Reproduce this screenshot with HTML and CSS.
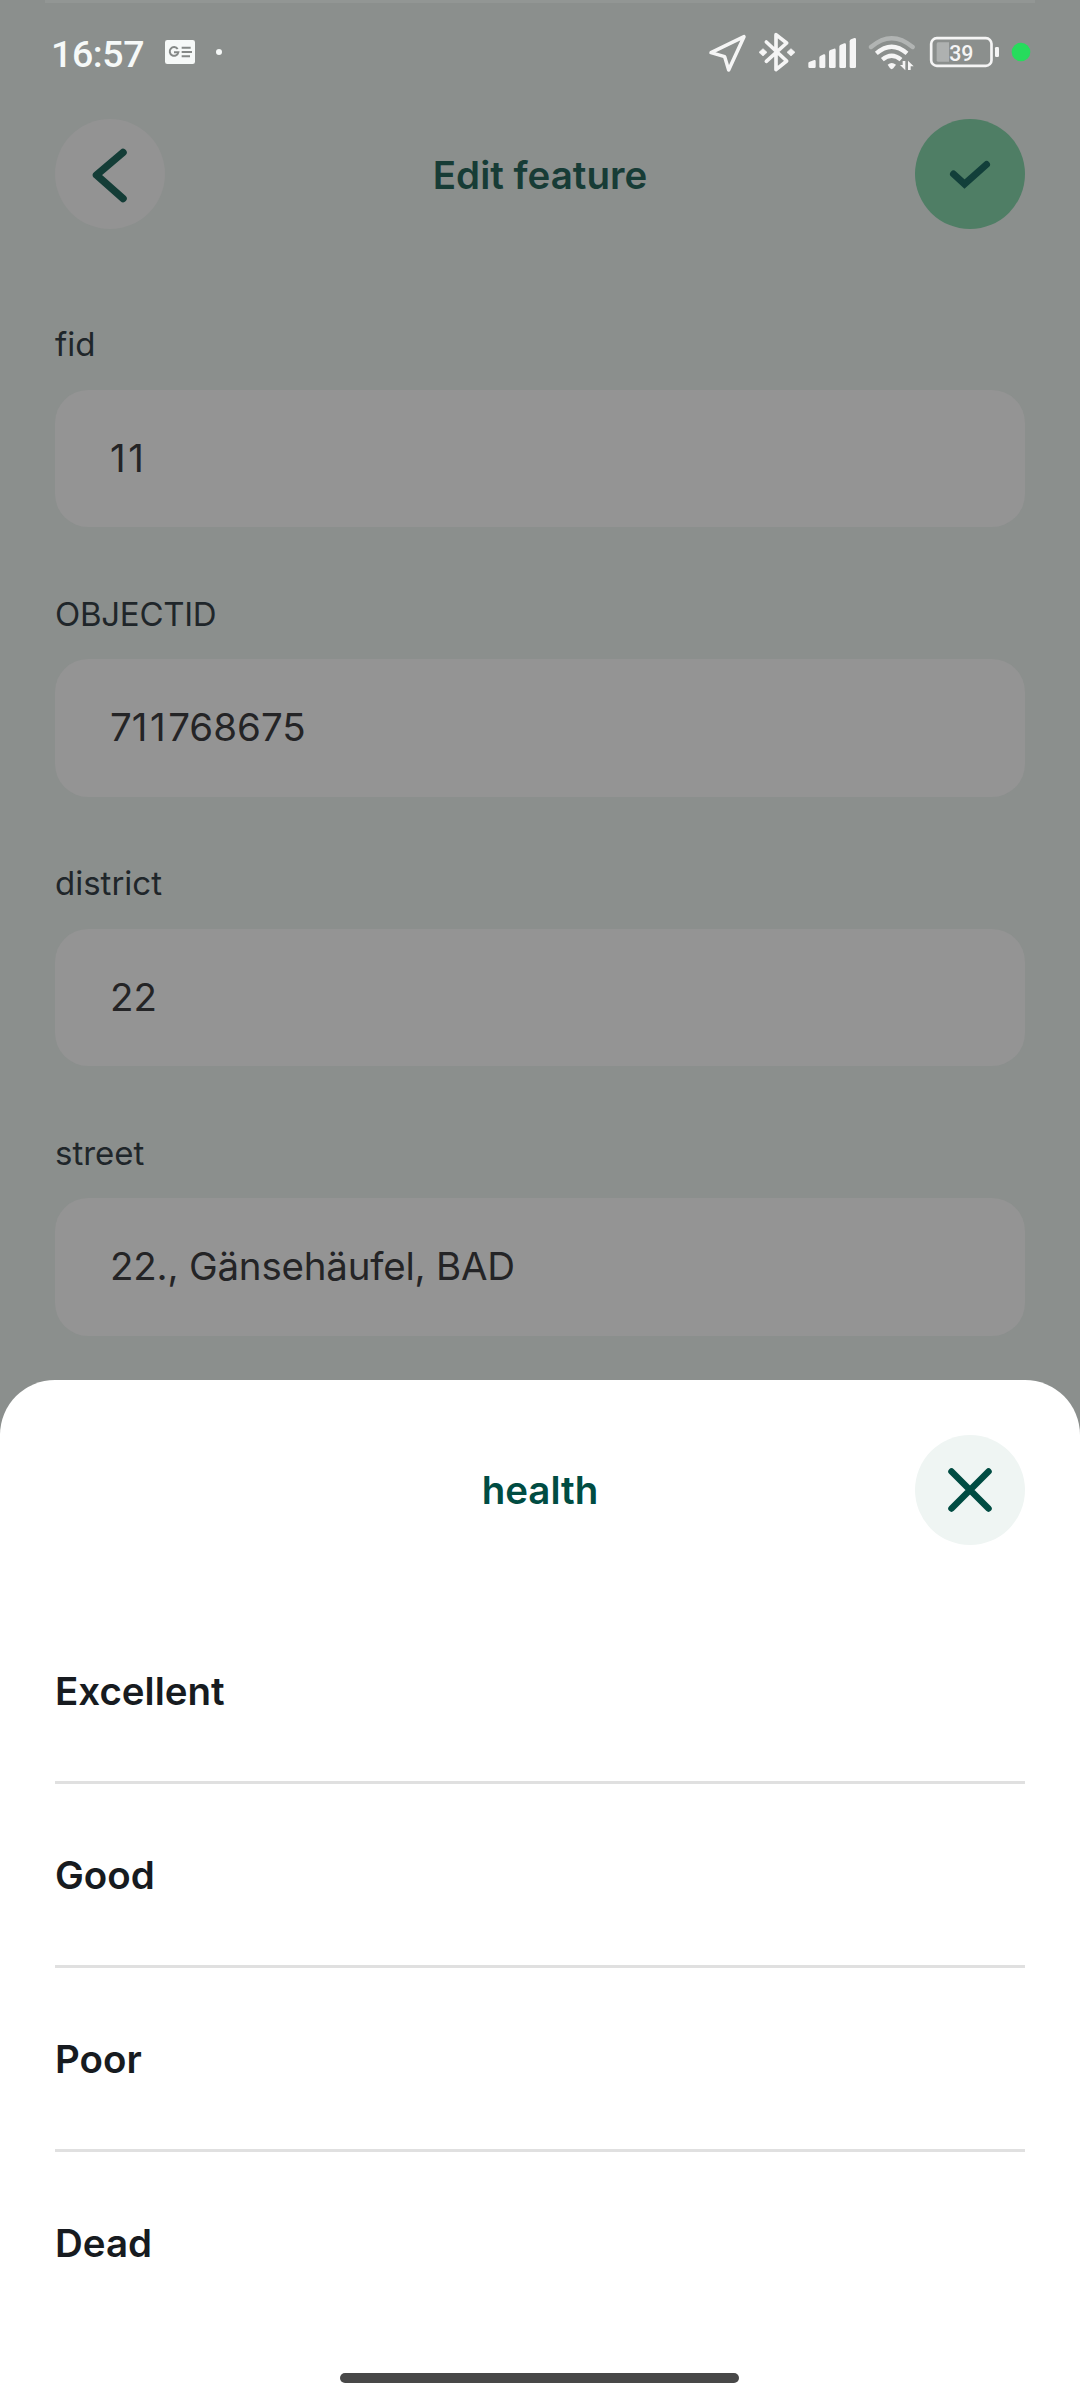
FILE: index.html
```html
<!DOCTYPE html>
<html lang="en">
<head>
<meta charset="utf-8">
<title>Edit feature</title>
<link rel="stylesheet" href="styles.css">
</head>
<body>
<div class="screen">
  <div class="top-edge"></div>
  <div class="status">
    <div class="status-left">
      <span class="time">16:57</span>
      <svg class="news" viewBox="0 0 90 72"><rect width="90" height="72" rx="7" fill="#f6f9f8"/><g fill="none" stroke="#858987" stroke-width="6"><path d="M38 27a13 13 0 1 0 2 10H27"/><path d="M50 23h27M50 36h31M50 49h25"/></g></svg>
      <span class="more"></span>
    </div>
    <div class="status-right">
      <svg width="40" height="43.33" viewBox="54 30 120 130"><path d="M162 50 116 150 104 110 63 98Z" fill="none" stroke="#f5f5f5" stroke-width="10.500" stroke-linejoin="round"/></svg>
      <svg width="39" height="43.33" viewBox="204 30 117 130"><path d="M229 66 290 123 258 149V44L290 69 229 124" fill="none" stroke="#f5f5f5" stroke-width="11" stroke-linejoin="round" stroke-linecap="round"/><path d="M207 97l12-11 12 11-12 11zM291 97l12-11 12 11-12 11z" fill="#f5f5f5" stroke="#f5f5f5" stroke-width="2"/></svg>
      <svg width="50" height="43.33" viewBox="351 30 150 130"><g fill="#f5f5f5"><path d="M355 129q0-3 4-4l14-5q4-1 4 4v16q0 4-4 4h-14q-4 0-4-4z"/><path d="M388 113q0-4 4-6l9-4q5-1 5 4v33q0 4-4 4h-10q-4 0-4-4z"/><path d="M417 96q0-4 4-6l11-4q5-1 5 4v50q0 4-4 4h-12q-4 0-4-4z"/><path d="M448 80q0-4 4-6l11-4q5-1 5 4v66q0 4-4 4h-12q-4 0-4-4z"/><path d="M479 64q0-4 4-6l10-4q5-1 5 4v82q0 4-4 4h-11q-4 0-4-4z"/></g></svg>
      <svg width="50" height="43.33" viewBox="531 30 150 130"><g fill="none" stroke-width="13"><path d="M543 81Q605 28 668 81" stroke="#b1b4b3" stroke-linecap="round"/><path d="M559 100Q605 60 651 100" stroke="#f5f5f5"/><path d="M577 119Q605 95 633 119" stroke="#f5f5f5"/></g><path d="M593 134q12-10 25 0l-8 11q-5 5-10 0z" fill="#f5f5f5"/><path d="M646 123v28l-16-16h8v-12zM654 150v-28l17 17h-9v11z" fill="#f5f5f5"/></svg>
      <svg width="73" height="43.33" viewBox="711 30 219 130"><path d="M744 67h33v58h-33q-4 0-4-4V72q0-5 4-5z" fill="#aeb1b0"/><rect x="723.5" y="54.500" width="181" height="83" rx="17" fill="none" stroke="#f5f5f5" stroke-width="8"/><rect x="915" y="81" width="12" height="30" rx="4" fill="#f5f5f5"/><text x="814" y="122" text-anchor="middle" class="level">39</text></svg>
      <svg width="21" height="43.33" viewBox="960 30 63 130"><circle cx="993" cy="96" r="28" fill="#26dc5c"/></svg>
    </div>
  </div>

  <header class="header">
    <button class="round back" aria-label="Back"><svg viewBox="0 0 110 110"><path d="M68 33.500 41.500 56 68 79.500" fill="none" stroke="#143d37" stroke-width="7.500" stroke-linecap="round" stroke-linejoin="round"/></svg></button>
    <h1 class="title page-title">Edit feature</h1>
    <button class="round save" aria-label="Save"><svg viewBox="0 0 110 110"><path d="M38.500 55 49.500 65 71.500 45.500" fill="none" stroke="#123f3a" stroke-width="7" stroke-linecap="round" stroke-linejoin="miter"/></svg></button>
  </header>

  <main class="form">
    <div class="field"><div class="label">fid</div><div class="input"><span class="ones">11</span></div></div>
    <div class="field"><div class="label caps">OBJECTID</div><div class="input">7<span class="ones">11</span>768675</div></div>
    <div class="field"><div class="label">district</div><div class="input">22</div></div>
    <div class="field"><div class="label">street</div><div class="input address">22., Gänsehäufel, BAD</div></div>
  </main>

  <section class="sheet">
    <div class="sheet-header">
      <span></span>
      <h2 class="title sheet-title">health</h2>
      <button class="round close" aria-label="Close"><svg viewBox="0 0 110 110"><path d="M36.500 36.500 73.500 73.500M73.500 36.500 36.500 73.500" fill="none" stroke="#004c42" stroke-width="6.500" stroke-linecap="round"/></svg></button>
    </div>
    <ul class="options">
      <li>Excellent</li>
      <li>Good</li>
      <li>Poor</li>
      <li>Dead</li>
    </ul>
    <div class="home-bar"></div>
  </section>
</div>
</body>
</html>
```
FILE: styles.css
```css
* { box-sizing: border-box; }

body {
  margin: 0;
  font-family: Inter, "Liberation Sans", sans-serif;
}

.screen {
  display: flex;
  flex-direction: column;
  width: 1080px;
  height: 2400px;
  background: #8b8f8d;
  overflow: hidden;
}

.top-edge {
  height: 3px;
  margin: 0 45px;
  background: #929694;
}

.status {
  display: flex;
  justify-content: space-between;
  height: 116px;
  padding: 27px 49px 0 51px;
}

.status-left {
  display: flex;
  height: 50px;
}

.time {
  width: 114px;
  font: 500 37.500px/49px Roboto, sans-serif;
  letter-spacing: -0.400px;
  color: #f6f9f8;
}

.news {
  width: 30px;
  height: 24px;
  margin-top: 10px;
}

.more {
  width: 6px;
  height: 6px;
  margin: 19px 0 0 21px;
  border-radius: 50%;
  background: #f6f9f8;
}

.status-right {
  display: flex;
  gap: 10px;
}

.level {
  font: 500 64px Roboto, sans-serif;
  fill: #f5f5f5;
}

.header,
.sheet-header {
  display: grid;
  grid-template-columns: 110px 1fr 110px;
  align-items: center;
  width: 970px;
  height: 110px;
  padding: 0 55px;
  box-sizing: content-box;
}

.title {
  margin: 0;
  font-size: 38.500px;
  font-weight: 600;
  line-height: 48px;
  text-align: center;
}

.page-title {
  padding-top: 2px;
  color: #173c36;
}

.round {
  width: 110px;
  height: 110px;
  padding: 0;
  border: 0;
  border-radius: 50%;
}

.round svg {
  display: block;
  width: 110px;
  height: 110px;
}

.back { background: #939393; }
.save { background: #4f7e65; }
.close { background: #eff5f3; }

.form {
  display: flex;
  flex-direction: column;
  gap: 67.500px;
  height: 1151px;
  padding: 96px 55px 0;
}

.field { height: 202px; }

.label {
  height: 40px;
  margin-bottom: 24.500px;
  font-size: 33px;
  line-height: 39.500px;
  color: #1f262a;
}

.caps { letter-spacing: -0.280px; }

.input {
  height: 137.500px;
  padding: 0 55px;
  border-radius: 33px;
  background: #949494;
  font-size: 38.500px;
  line-height: 137.500px;
  color: #242426;
}

.ones { letter-spacing: 2.500px; }

.address { letter-spacing: -0.210px; }

.sheet {
  display: flex;
  flex-direction: column;
  align-items: center;
  height: 1020px;
  padding-top: 55px;
  border-radius: 55px 55px 0 0;
  background: #fff;
}

.sheet-title { color: #004c42; }

.options {
  width: 970px;
  margin: 54.500px 0 0;
  padding: 0;
  list-style: none;
}

.options li {
  display: flex;
  align-items: center;
  height: 184.250px;
  padding-top: 1px;
  border-bottom: 3px solid #e0e0e0;
  font-size: 38.500px;
  font-weight: 600;
  color: #171b20;
}

.options li:last-child { border-bottom-color: transparent; }

.home-bar {
  width: 399px;
  height: 10px;
  margin: auto 1px 17px 0;
  border-radius: 5px;
  background: #484848;
}
```
